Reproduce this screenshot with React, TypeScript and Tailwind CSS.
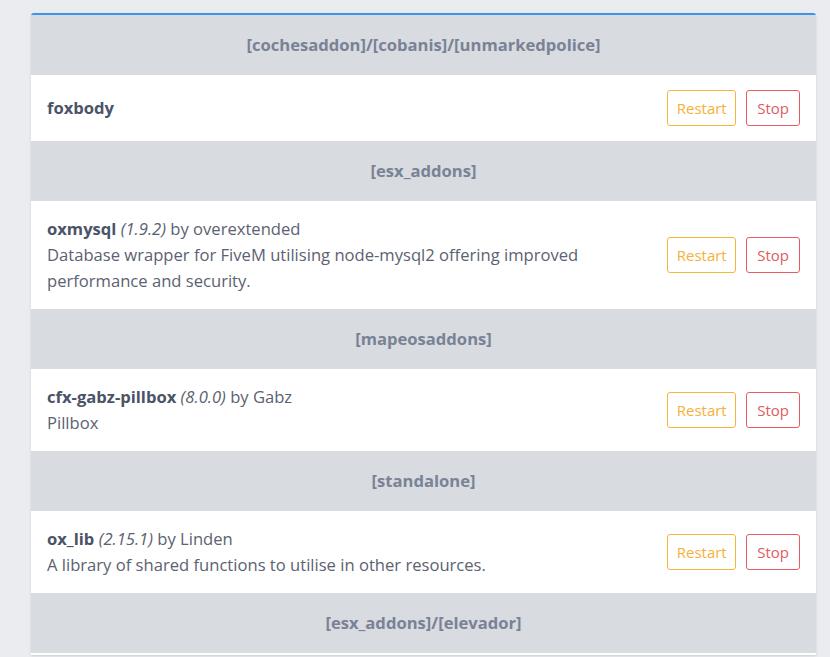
import React from 'react';

type Resource = {
    name: string;
    version?: string;
    author?: string;
    description?: string;
};

type Group = {
    category: string;
    resources: Resource[];
};

const GROUPS: Group[] = [
    { category: '[cochesaddon]/[cobanis]/[unmarkedpolice]', resources: [{ name: 'foxbody' }] },
    {
        category: '[esx_addons]',
        resources: [
            {
                name: 'oxmysql',
                version: '1.9.2',
                author: 'overextended',
                description: 'Database wrapper for FiveM utilising node-mysql2 offering improved performance and security.',
            },
        ],
    },
    {
        category: '[mapeosaddons]',
        resources: [{ name: 'cfx-gabz-pillbox', version: '8.0.0', author: 'Gabz', description: 'Pillbox' }],
    },
    {
        category: '[standalone]',
        resources: [
            {
                name: 'ox_lib',
                version: '2.15.1',
                author: 'Linden',
                description: 'A library of shared functions to utilise in other resources.',
            },
        ],
    },
    { category: '[esx_addons]/[elevador]', resources: [] },
];

const ResourceRow: React.FC<{ resource: Resource }> = ({ resource }) => (
    <div className="flex items-center bg-white px-4 py-[15px] gap-4">
        <div className="flex-1 text-[16.6px] leading-[26px] text-[#5b6270]">
            <div>
                <span className="font-bold text-[#4b5467]">{resource.name}</span>
                {resource.version && <span className="italic"> ({resource.version})</span>}
                {resource.author && <span> by {resource.author}</span>}
            </div>
            {resource.description && <div className="max-w-[560px]">{resource.description}</div>}
        </div>
        <div className="flex gap-[10px]">
            <button className="h-[36px] px-[8.5px] rounded-[3px] border border-[#f5b63a] text-[#f4b13a] text-[15px]">
                Restart
            </button>
            <button className="h-[36px] px-[10px] rounded-[3px] border border-[#e35d61] text-[#e05a5e] text-[15px]">
                Stop
            </button>
        </div>
    </div>
);

export default function App() {
    return (
        <div className="min-h-[657px] bg-[#eaecef] pt-[13px] pl-[31px] pr-[14px]" style={{ fontFamily: '"Open Sans", sans-serif' }}>
            <div className="border-t-2 border-[#3b94f0] rounded-t-[3px] bg-white pb-[2px] shadow-sm">
                {GROUPS.map((group) => (
                    <div key={group.category}>
                        <div className="h-[60px] flex items-center justify-center bg-[#d8dbe0] text-[16.6px] font-bold text-[#7a8295]">
                            {group.category}
                        </div>
                        {group.resources.map((r) => (
                            <ResourceRow key={r.name} resource={r} />
                        ))}
                    </div>
                ))}
            </div>
        </div>
    );
}
